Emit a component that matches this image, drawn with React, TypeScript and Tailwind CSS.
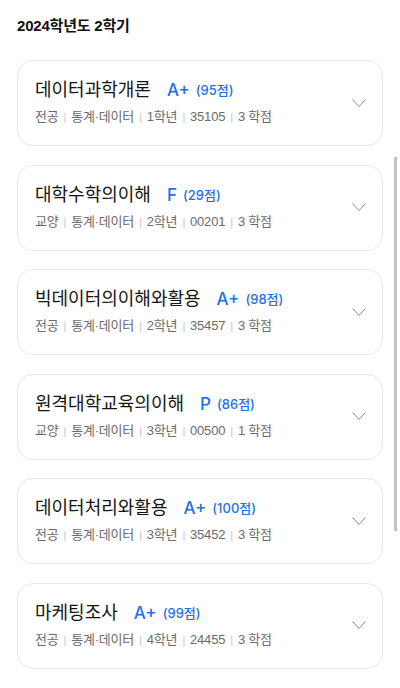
import React from "react";

type Course = {
  name: string;
  grade: string;
  score: number;
  kind: string;
  year: string;
  code: string;
  credit: string;
};

const courses: Course[] = [
  { name: "데이터과학개론", grade: "A+", score: 95, kind: "전공", year: "1학년", code: "35105", credit: "3 학점" },
  { name: "대학수학의이해", grade: "F", score: 29, kind: "교양", year: "2학년", code: "00201", credit: "3 학점" },
  { name: "빅데이터의이해와활용", grade: "A+", score: 98, kind: "전공", year: "2학년", code: "35457", credit: "3 학점" },
  { name: "원격대학교육의이해", grade: "P", score: 86, kind: "교양", year: "3학년", code: "00500", credit: "1 학점" },
  { name: "데이터처리와활용", grade: "A+", score: 100, kind: "전공", year: "3학년", code: "35452", credit: "3 학점" },
  { name: "마케팅조사", grade: "A+", score: 99, kind: "전공", year: "4학년", code: "24455", credit: "3 학점" },
];

const FONT = { fontFamily: '"Liberation Sans", "Noto Sans CJK KR", sans-serif' };
const GRADE_FONT = { fontFamily: 'Inter, "Noto Sans CJK KR", sans-serif' };

function Sep() {
  return <span className="mx-[5px] text-[11px] text-[#c4c4c4]">|</span>;
}

function Card({ c }: { c: Course }) {
  return (
    <div className="flex items-center rounded-[16px] border border-[#e6e6e6] bg-white pl-[17px] pr-[16px] pt-[17px] pb-[19px]">
      <div className="flex-1">
        <div className="flex h-[24px] items-center">
          <span className="text-[18px] leading-[24px] text-[#141414]">{c.name}</span>
          <span className="ml-[16px] text-[17px] font-medium leading-[24px] text-[#1f6fee]" style={GRADE_FONT}>{c.grade}</span>
          <span className="ml-[6px] text-[13px] font-medium leading-[24px] text-[#1f6fee]" style={GRADE_FONT}>({c.score}점)</span>
        </div>
        <div className="mt-[6px] flex h-[18px] items-center text-[13px] leading-[18px] tracking-[-0.2px] text-[#6b6b6b]">
          <span>{c.kind}</span>
          <Sep />
          <span>통계·데이터</span>
          <Sep />
          <span>{c.year}</span>
          <Sep />
          <span>{c.code}</span>
          <Sep />
          <span>{c.credit}</span>
        </div>
      </div>
      <svg width="14" height="9" viewBox="0 0 14 9" className="mt-[2px] shrink-0">
        <polyline points="0.5,0.5 7,7.5 13.5,0.5" fill="none" stroke="#8c8c8c" strokeWidth="1" />
      </svg>
    </div>
  );
}

export default function App() {
  return (
    <div className="relative h-[688px] w-[400px] overflow-hidden bg-white" style={FONT}>
      <div className="px-[17px] pt-[16px]">
        <div className="h-[20px] text-[15px] font-semibold leading-[20px] tracking-[-0.2px] text-[#111]">2024학년도 2학기</div>
        <div className="mt-[24px] flex flex-col gap-[18.5px]">
          {courses.map((c) => (
            <Card key={c.name} c={c} />
          ))}
        </div>
      </div>
      <div className="absolute left-[394px] top-[157px] h-[374px] w-[3px] bg-[#c2c2c2]" />
    </div>
  );
}
